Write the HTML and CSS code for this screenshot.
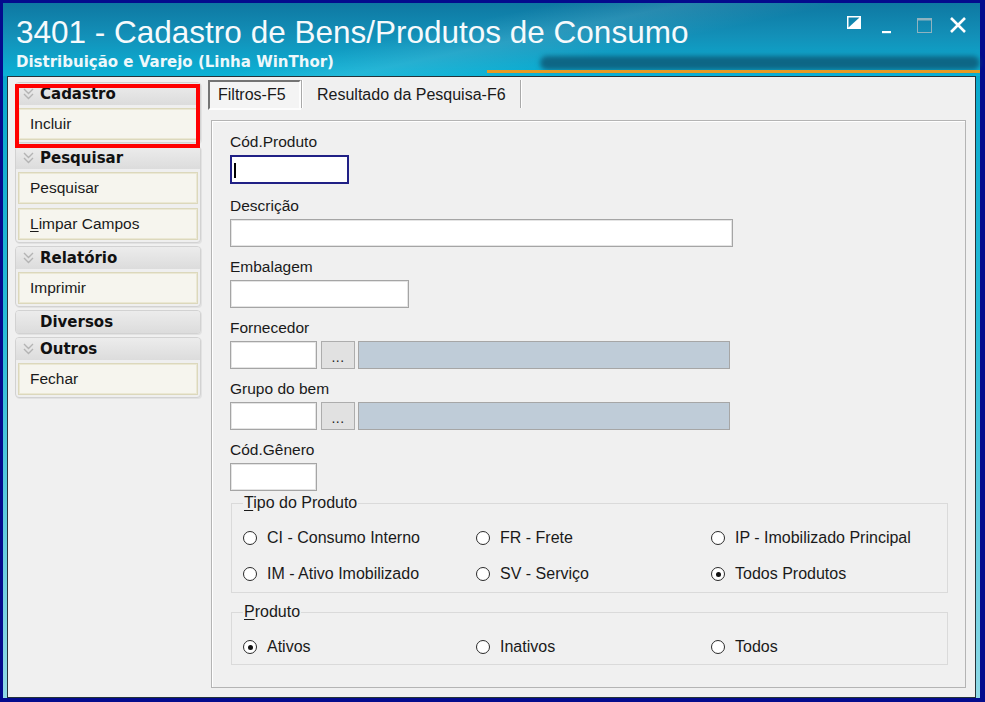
FILE: index.html
```html
<!DOCTYPE html>
<html lang="pt-BR">
<head>
<meta charset="utf-8">
<title>3401 - Cadastro de Bens/Produtos de Consumo</title>
<link rel="stylesheet" href="styles.css">
</head>
<body>
<div class="window">
  <header class="titlebar">
    <div class="title-row">
      <h1 class="title">3401 - Cadastro de Bens/Produtos de Consumo</h1>
      <svg class="controls" width="120" height="20" viewBox="0 0 120 20" aria-hidden="true">
        <rect x="0.75" y="1.75" width="12.5" height="11.5" fill="none" stroke="#fff" stroke-width="1.5"/>
        <polygon points="1,13 13,13 13,2" fill="#fff"/>
        <rect x="35" y="16" width="9" height="2.2" fill="#fff"/>
        <rect x="70.5" y="3.5" width="14" height="14" fill="none" stroke="#8fb3c0" stroke-width="1"/>
        <rect x="70" y="3" width="15" height="2.5" fill="#8fb3c0"/>
        <path d="M104 3 L118 17 M118 3 L104 17" stroke="#fff" stroke-width="2.6" fill="none"/>
      </svg>
    </div>
    <div class="subtitle">Distribuição e Varejo (Linha WinThor)</div>
    <div class="user-blur"></div>
    <div class="orange-line"></div>
  </header>

  <div class="client">
    <aside class="sidebar">
      <section class="panel">
        <div class="panel-head"><svg class="chev" width="11" height="12" viewBox="0 0 11 12"><path d="M1 1 L5.5 5.5 L10 1 M1 6 L5.5 10.5 L10 6" fill="none" stroke="#b4b4b4" stroke-width="1.4"/></svg>Cadastro</div>
        <div class="panel-body"><div class="btn">Incluir</div></div>
      </section>
      <section class="panel">
        <div class="panel-head"><svg class="chev" width="11" height="12" viewBox="0 0 11 12"><path d="M1 1 L5.5 5.5 L10 1 M1 6 L5.5 10.5 L10 6" fill="none" stroke="#b4b4b4" stroke-width="1.4"/></svg>Pesquisar</div>
        <div class="panel-body">
          <div class="btn">Pesquisar</div>
          <div class="btn"><u>L</u>impar Campos</div>
        </div>
      </section>
      <section class="panel">
        <div class="panel-head"><svg class="chev" width="11" height="12" viewBox="0 0 11 12"><path d="M1 1 L5.5 5.5 L10 1 M1 6 L5.5 10.5 L10 6" fill="none" stroke="#b4b4b4" stroke-width="1.4"/></svg>Relatório</div>
        <div class="panel-body"><div class="btn">Imprimir</div></div>
      </section>
      <section class="panel">
        <div class="panel-head plain">Diversos</div>
      </section>
      <section class="panel">
        <div class="panel-head"><svg class="chev" width="11" height="12" viewBox="0 0 11 12"><path d="M1 1 L5.5 5.5 L10 1 M1 6 L5.5 10.5 L10 6" fill="none" stroke="#b4b4b4" stroke-width="1.4"/></svg>Outros</div>
        <div class="panel-body"><div class="btn">Fechar</div></div>
      </section>
      <div class="highlight"></div>
    </aside>

    <main class="main">
      <nav class="tabs">
        <div class="tab active">Filtros-F5</div>
        <span class="tab-sep"></span>
        <div class="tab">Resultado da Pesquisa-F6</div>
        <span class="tab-sep"></span>
      </nav>

      <div class="tabpanel">
        <div class="field first">
          <div class="label">Cód.Produto</div>
          <div class="input focused w-code"><span class="caret"></span></div>
        </div>
        <div class="field">
          <div class="label">Descrição</div>
          <div class="input w-desc"></div>
        </div>
        <div class="field">
          <div class="label">Embalagem</div>
          <div class="input w-emb"></div>
        </div>
        <div class="field">
          <div class="label">Fornecedor</div>
          <div class="lookup">
            <div class="input w-small"></div>
            <div class="dots">...</div>
            <div class="readonly"></div>
          </div>
        </div>
        <div class="field">
          <div class="label">Grupo do bem</div>
          <div class="lookup">
            <div class="input w-small"></div>
            <div class="dots">...</div>
            <div class="readonly"></div>
          </div>
        </div>
        <div class="field last">
          <div class="label">Cód.Gênero</div>
          <div class="input w-small"></div>
        </div>

        <fieldset class="group tipo">
          <legend><u>T</u>ipo do Produto</legend>
          <div class="radios">
            <div class="radio"><span class="dot"></span>CI - Consumo Interno</div>
            <div class="radio"><span class="dot"></span>FR - Frete</div>
            <div class="radio"><span class="dot"></span>IP - Imobilizado Principal</div>
            <div class="radio"><span class="dot"></span>IM - Ativo Imobilizado</div>
            <div class="radio"><span class="dot"></span>SV - Serviço</div>
            <div class="radio"><span class="dot on"></span>Todos Produtos</div>
          </div>
        </fieldset>

        <fieldset class="group produto">
          <legend><u>P</u>roduto</legend>
          <div class="radios">
            <div class="radio"><span class="dot on"></span>Ativos</div>
            <div class="radio"><span class="dot"></span>Inativos</div>
            <div class="radio"><span class="dot"></span>Todos</div>
          </div>
        </fieldset>
      </div>
    </main>
  </div>
</div>
</body>
</html>
```

FILE: styles.css
```css
html, body {
  margin: 0;
  padding: 0;
}

body {
  width: 985px;
  height: 702px;
  overflow: hidden;
  background: #040b8d;
  font-family: "Liberation Sans", Arial, sans-serif;
  color: #1a1a1a;
}

u {
  text-decoration: underline;
  text-underline-offset: 2px;
}

/* ---------- window frame ---------- */
.window {
  margin: 3px 5px 0 3px;
  height: 695px;
  display: flex;
  flex-direction: column;
  background: linear-gradient(180deg, #1180a9 0px, #0aa9cd 80px, #28bcd7 320px, #8fd9e6 695px);
}

.titlebar {
  position: relative;
  height: 73px;
  flex: none;
  box-sizing: border-box;
  padding: 11px 13px 0 13px;
  color: #fff;
  background:
    linear-gradient(168deg, rgba(255,255,255,0) 42%, rgba(255,255,255,0.10) 52%, rgba(255,255,255,0) 64%),
    linear-gradient(180deg, #0e78a2 0%, #1390b8 45%, #0bb2d6 100%);
}

.title-row {
  display: flex;
  justify-content: space-between;
  align-items: flex-start;
}

.title {
  margin: 0;
  font: 400 31.5px/36px "Liberation Sans", Arial, sans-serif;
  color: #f6fafc;
  white-space: nowrap;
}

.controls {
  display: block;
  margin-top: 1px;
}

.subtitle {
  margin-top: 3px;
  font: 700 15px/18px "DejaVu Sans", sans-serif;
  color: #eef8fb;
  white-space: nowrap;
}

.user-blur {
  position: absolute;
  left: 537px;
  top: 53px;
  width: 440px;
  height: 14px;
  border-radius: 8px;
  background: rgba(14, 80, 110, 0.75);
  filter: blur(2.5px);
}

.orange-line {
  position: absolute;
  left: 484px;
  right: 0;
  top: 67px;
  height: 3px;
  background: #e79a22;
}

/* ---------- client area ---------- */
.client {
  flex: 1;
  margin: 0 4px 0 4px;
  border: 1px solid #24333a;
  background: #f0f0f0;
  display: flex;
  padding: 3px 9px 0 7px;
  min-height: 0;
}

/* ---------- sidebar ---------- */
.sidebar {
  position: relative;
  width: 186px;
  flex: none;
  display: flex;
  flex-direction: column;
  gap: 3px;
  padding-top: 2px;
}

.panel {
  border: 1px solid #d2d2d2;
  border-radius: 4px;
  background: #efefef;
  box-shadow: 1px 1px 0 #e2e2e2;
}

.panel-head {
  display: flex;
  align-items: center;
  height: 22px;
  padding-left: 7px;
  font: 700 15px/22px "DejaVu Sans", sans-serif;
  color: #111;
  border-radius: 3px 3px 0 0;
  background: linear-gradient(180deg, #ececec 0%, #dcdcdc 100%);
}

.panel-head.plain {
  padding-left: 24px;
  border-radius: 3px;
}

.chev {
  display: block;
  margin-right: 6px;
}

.panel-body {
  display: flex;
  flex-direction: column;
  gap: 4px;
  padding: 3px 2px 2px 2px;
}

.btn {
  height: 32px;
  box-sizing: border-box;
  border: 1px solid #dcd8bc;
  box-shadow: inset 0 0 0 1px #ebe8d4;
  background: #f6f5ee;
  padding-left: 11px;
  font-size: 15.5px;
  line-height: 30px;
  color: #1a1a1a;
}

.highlight {
  position: absolute;
  left: 0;
  top: 4px;
  width: 185px;
  height: 64px;
  box-sizing: border-box;
  border: 4px solid #ff0000;
}

/* ---------- main ---------- */
.main {
  flex: 1;
  margin-left: 7px;
  display: flex;
  flex-direction: column;
  padding-bottom: 9px;
  min-width: 0;
}

.tabs {
  display: flex;
  align-items: flex-start;
  height: 30px;
  flex: none;
}

.tab {
  height: 30px;
  box-sizing: border-box;
  font-size: 16px;
  line-height: 30px;
  color: #1a1a1a;
  padding: 0 14px;
}

.tab.active {
  width: 93px;
  padding: 0 0 0 8px;
  line-height: 26px;
  border: 2px solid;
  border-color: #747474 #fdfdfd #fdfdfd #747474;
  background: #f4f4f4;
}

.tab-sep {
  width: 1px;
  height: 28px;
  margin: 0 1px 0 0;
  background: #a9a9a9;
  box-shadow: 1px 0 0 #ffffff;
}

.tabpanel {
  flex: 1;
  margin: 10px 0 0 3px;
  border: 1px solid #b4b4b4;
  box-shadow: inset 1px 1px 0 #ffffff;
  padding: 12px 0 0 18px;
}

.field {
  margin-bottom: 11px;
}

.field.first {
  margin-bottom: 13px;
}

.field.last {
  margin-bottom: 0;
}

.label {
  font-size: 15.5px;
  line-height: 18px;
  margin-bottom: 4px;
  color: #1a1a1a;
}

.input {
  height: 28px;
  box-sizing: border-box;
  background: #fff;
  border: 1px solid #a5a5a5;
  box-shadow: inset 0 0 0 1px #e4e4e4;
}

.input.focused {
  height: 29px;
  border: 2px solid #202085;
  box-shadow: none;
  position: relative;
}

.caret {
  position: absolute;
  left: 2px;
  top: 6px;
  width: 2px;
  height: 15px;
  background: #000;
}

.w-code { width: 119px; }
.w-desc { width: 503px; }
.w-emb  { width: 179px; }
.w-small { width: 87px; }

.lookup {
  display: flex;
  align-items: stretch;
  height: 28px;
}

.lookup .input {
  margin-right: 4px;
}

.dots {
  width: 34px;
  box-sizing: border-box;
  background: #e1e1e1;
  border: 1px solid #adadad;
  text-align: center;
  font-size: 14px;
  line-height: 30px;
  letter-spacing: 0.5px;
  color: #222;
  margin-right: 3px;
}

.readonly {
  width: 372px;
  box-sizing: border-box;
  background: #bfccd8;
  border: 1px solid #a6a6a6;
}

/* ---------- group boxes ---------- */
.group {
  width: 717px;
  box-sizing: border-box;
  margin: 0 0 0 1px;
  border: 1px solid #dadada;
  padding: 15px 0 7px 11px;
  min-width: 0;
}

.group.tipo {
  margin-top: 3px;
}

.group.produto {
  margin-top: 10px;
  padding-bottom: 6px;
}

.group legend {
  padding: 0 1px;
  font-size: 16px;
  line-height: 18px;
  color: #1a1a1a;
}

.radios {
  display: grid;
  grid-template-columns: 233px 235px 1fr;
  row-gap: 14px;
}

.radio {
  display: flex;
  align-items: center;
  height: 22px;
  font-size: 16px;
  color: #1a1a1a;
  white-space: nowrap;
}

.dot {
  width: 14px;
  height: 14px;
  box-sizing: border-box;
  border: 1.3px solid #2a2a2a;
  border-radius: 50%;
  background: #fff;
  margin-right: 10px;
  display: flex;
  align-items: center;
  justify-content: center;
  flex: none;
}

.dot.on::after {
  content: "";
  width: 5px;
  height: 5px;
  border-radius: 50%;
  background: #111;
}
```
